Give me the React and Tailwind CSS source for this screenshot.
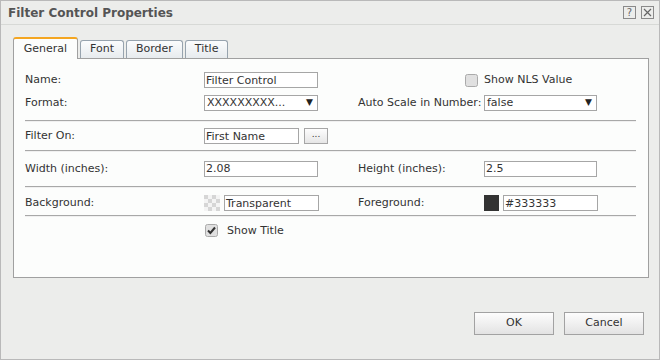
import React from 'react';

const font = "font-['DejaVu_Sans',Verdana,sans-serif]";

function Separator({ className = '' }) {
    return (
        <div className={`border-t border-[#a8a8a8] border-b border-b-[#f0f0f0] ${className}`} />
    );
}

function TextBox({ value, className = '' }) {
    return (
        <div className={`h-[16px] border border-[#a6a6a6] bg-white px-[1px] flex items-center leading-none ${className}`}>
            {value}
        </div>
    );
}

function Select({ value, className = '' }) {
    return (
        <div className={`h-[16px] border border-[#a6a6a6] bg-white pl-[2px] pr-[4px] flex items-center justify-between leading-none ${className}`}>
            <span>{value}</span>
            <span className="text-[9px] text-[#222]">▼</span>
        </div>
    );
}

function CheckBox({ checked }) {
    return (
        <svg width="13" height="13" viewBox="0 0 13 13">
            <rect x="0.5" y="0.5" width="12" height="12" rx="2" fill="#e0e0e0" stroke="#aaaaaa" />
            {checked && <path d="M3 6.5 L5.4 9 L10 3.5" fill="none" stroke="#333" strokeWidth="2" />}
        </svg>
    );
}

function Checker() {
    return (
        <svg width="16" height="16" viewBox="0 0 16 16">
            <rect width="16" height="16" fill="#f4f4f4" />
            {[0, 1, 2, 3].map(r => [0, 1, 2, 3].map(c => ((r + c) % 2 === 0 ? (
                <rect key={`${r}-${c}`} x={c * 4} y={r * 4} width="4" height="4" fill="#d6d6d6" />
            ) : null)))}
        </svg>
    );
}

function Tab({ label, active }) {
    if (active) {
        return (
            <div className="h-[22px] w-[65px] mb-[-1px] relative bg-[#fcfdfc] border border-[#a0a0a0] border-b-0 border-t-2 border-t-[#f4a621] rounded-t-[3px] flex items-center justify-center text-[#333]">
                {label}
            </div>
        );
    }
    return (
        <div className="h-[18px] px-[9px] bg-gradient-to-b from-[#fbfcfd] to-[#e7ebee] border border-[#97a3ae] border-b-0 rounded-t-[3px] flex items-center text-[#333]">
            {label}
        </div>
    );
}

function Button({ label }) {
    return (
        <div className="w-[80px] h-[23px] border border-[#a2a2a2] bg-gradient-to-b from-[#fdfdfd] to-[#e3e3e3] flex items-center justify-center text-[#333]">
            {label}
        </div>
    );
}

export default function App() {
    return (
        <div className={`w-[660px] h-[360px] bg-[#ecedeb] border border-[#b9b9b9] flex flex-col text-[11px] text-[#333] ${font}`}>
            <div className="h-[24px] shrink-0 flex items-center justify-between pl-[7px] pr-[5px] border-b border-[#d7d9d6]">
                <span className="font-bold text-[12px] text-[#555]">Filter Control Properties</span>
                <div className="flex gap-[5px]">
                    <div className="w-[13px] h-[13px] border border-[#8a8a8a] flex items-center justify-center text-[10px] leading-none text-[#666]">?</div>
                    <div className="w-[13px] h-[13px] border border-[#8a8a8a] flex items-center justify-center">
                        <svg width="9" height="9" viewBox="0 0 9 9"><path d="M1 1 L8 8 M8 1 L1 8" stroke="#666" strokeWidth="1.2" /></svg>
                    </div>
                </div>
            </div>

            <div className="pl-[12px] pr-[10px] pt-[12px]">
                <div className="flex items-end gap-[2px] h-[21px] relative z-10">
                    <Tab label="General" active />
                    <Tab label="Font" />
                    <Tab label="Border" />
                    <Tab label="Title" />
                </div>
                <div className="h-[220px] border border-[#a0a0a0] bg-[#fcfdfc] pl-[11px] pr-[12px] pt-[13px]">
                    <div className="grid grid-cols-[179px_154px_126px_1fr] items-center gap-y-[6px]">
                        <span>Name:</span>
                        <TextBox value="Filter Control" className="w-[114px]" />
                        <span />
                        <div className="flex items-center gap-[6px] ml-[-19px]">
                            <CheckBox />
                            <span>Show NLS Value</span>
                        </div>
                        <span>Format:</span>
                        <Select value="XXXXXXXXX..." className="w-[114px]" />
                        <span>Auto Scale in Number:</span>
                        <Select value="false" className="w-[113px]" />
                    </div>
                    <Separator className="mt-[9px]" />
                    <div className="grid grid-cols-[179px_1fr] items-center mt-[6px]">
                        <span>Filter On:</span>
                        <div className="flex gap-[5px]">
                            <TextBox value="First Name" className="w-[95px]" />
                            <div className="w-[24px] h-[16px] border border-[#a6a6a6] bg-gradient-to-b from-[#fdfdfd] to-[#e6e6e6] flex items-center justify-center text-[9px] leading-none pb-[3px]">...</div>
                        </div>
                    </div>
                    <Separator className="mt-[5px]" />
                    <div className="grid grid-cols-[179px_154px_126px_1fr] items-center mt-[9px]">
                        <span>Width (inches):</span>
                        <TextBox value="2.08" className="w-[114px]" />
                        <span>Height (inches):</span>
                        <TextBox value="2.5" className="w-[113px]" />
                    </div>
                    <Separator className="mt-[9px]" />
                    <div className="grid grid-cols-[179px_154px_126px_1fr] items-center mt-[7px]">
                        <span>Background:</span>
                        <div className="flex items-center gap-[4px]">
                            <Checker />
                            <TextBox value="Transparent" className="w-[95px]" />
                        </div>
                        <span>Foreground:</span>
                        <div className="flex items-center gap-[4px]">
                            <div className="w-[15px] h-[16px] bg-[#333333]" />
                            <TextBox value="#333333" className="w-[95px]" />
                        </div>
                    </div>
                    <Separator className="mt-[3px]" />
                    <div className="grid grid-cols-[179px_1fr] items-center mt-[6px]">
                        <span />
                        <div className="flex items-center gap-[9px] pl-[1px]">
                            <CheckBox checked />
                            <span>Show Title</span>
                        </div>
                    </div>
                </div>
            </div>

            <div className="flex-1 flex items-end justify-end gap-[10px] pr-[15px] pb-[24px]">
                <Button label="OK" />
                <Button label="Cancel" />
            </div>
        </div>
    );
}
